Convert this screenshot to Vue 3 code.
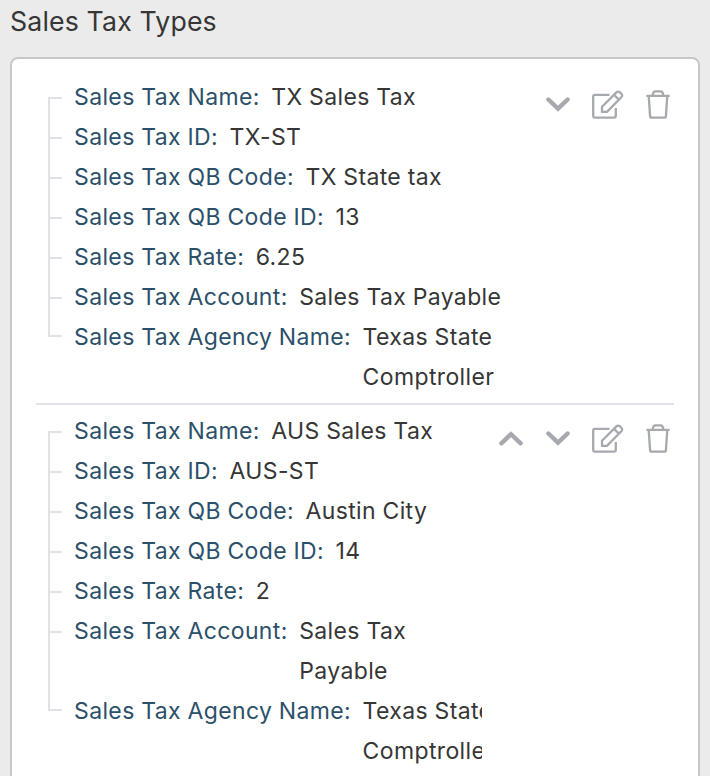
<script setup>
const common = (name, id, code, codeId, rate) => [
  ['Sales Tax Name:', name],
  ['Sales Tax ID:', id],
  ['Sales Tax QB Code:', code],
  ['Sales Tax QB Code ID:', codeId],
  ['Sales Tax Rate:', rate],
  ['Sales Tax Account:', 'Sales Tax Payable'],
  ['Sales Tax Agency Name:', 'Texas State Comptroller']
]

const items = [
  { canMoveUp: false, fields: common('TX Sales Tax', 'TX-ST', 'TX State tax', '13', '6.25') },
  { canMoveUp: true, fields: common('AUS Sales Tax', 'AUS-ST', 'Austin City', '14', '2') }
]
</script>

<template>
  <main class="page">
    <h1 class="title">Sales Tax Types</h1>
    <section class="card">
      <article v-for="item in items" :key="item.fields[1][1]" class="item">
        <ul class="fields">
          <li v-for="[label, value] in item.fields" :key="label" class="field">
            <span class="label">{{ label }}</span>
            <span class="value">{{ value }}</span>
          </li>
        </ul>
        <div class="actions">
          <svg v-if="item.canMoveUp" class="chevron" viewBox="0 0 24 16">
            <path d="M2.4 12.3 12 3.2 21.6 12.3" />
          </svg>
          <svg class="chevron" viewBox="0 0 24 16">
            <path d="M2.4 2.5 12 11.6 21.6 2.5" />
          </svg>
          <svg class="edit" viewBox="0 0.4 32 30">
            <path d="M17.5 5.2H3Q1.2 5.2 1.2 7V26.2Q1.2 28 3 28H22Q23.8 28 23.8 26.2V18.5" />
            <path d="M10 22.3V17.2L24.4 2.8Q26.2 1.2 28 2.8L29.3 4.1Q31.1 5.9 29.3 7.7L14.9 22.3Z" />
            <path d="M22 5.2 26.8 10" />
          </svg>
          <svg class="trash" viewBox="0 0.4 24 30">
            <path d="M0.4 6.3H23.6M2.7 6.3 4.1 26.5Q4.2 28 5.7 28H18.3Q19.8 28 19.9 26.5L21.3 6.3M6.7 5.8Q7.1 1.7 9.3 1.7H14.7Q16.9 1.7 17.3 5.8" />
          </svg>
        </div>
      </article>
    </section>
  </main>
</template>

<style>
body {
  background: #ebebeb;
  overflow: hidden;
}
</style>

<style scoped>
.page {
  box-sizing: border-box;
  height: 776px;
  padding: 0 10px;
  overflow: hidden;
  font-family: Inter, "Liberation Sans", sans-serif;
  color: #363636;
}
.title {
  margin: 0;
  height: 57px;
  font-size: 26.7px;
  line-height: 43px;
  font-weight: 400;
  letter-spacing: 0.15px;
}
.card {
  box-sizing: border-box;
  height: 800px;
  padding: 12px 24px;
  background: #fff;
  border: 2px solid #c7c7c7;
  border-radius: 8px;
}
.item {
  display: flex;
  align-items: flex-start;
  padding: 6px 0 6px 12px;
}
.item:not(:last-child) {
  border-bottom: 2px solid #e1e1e7;
}
.fields {
  flex: 1;
  min-width: 0;
  margin: 0;
  padding: 0;
  overflow: hidden;
  list-style: none;
}
.field {
  position: relative;
  display: flex;
  gap: 11.5px;
  padding-left: 26px;
  font-size: 23px;
  line-height: 40px;
  letter-spacing: 0.37px;
  word-spacing: -0.3px;
}
.field::before,
.field::after {
  content: "";
  position: absolute;
  left: 0;
  background: #e1e1e7;
}
.field::before {
  top: 0;
  bottom: 0;
  width: 2px;
}
.field::after {
  top: 20px;
  width: 14px;
  height: 2px;
}
.field:first-child::before {
  top: 20px;
}
.field:last-child::before {
  bottom: auto;
  height: 20px;
}
.field:last-child::after {
  top: 18px;
}
.label {
  flex: none;
  color: #2b5069;
}
.actions {
  display: flex;
  flex: none;
  align-items: center;
  gap: 22px;
  height: 30px;
  padding: 13px 4px 0 17px;
}
svg {
  display: block;
  fill: none;
  stroke: #a6a9ae;
  stroke-width: 2.3;
  stroke-linejoin: round;
}
.chevron {
  width: 24px;
  height: 16px;
  stroke-width: 4.4;
  stroke-linecap: round;
  stroke-linejoin: miter;
}
.chevron + .chevron {
  margin-left: 1px;
}
.edit {
  width: 32px;
  height: 30px;
}
.trash {
  width: 24px;
  height: 30px;
}
</style>
